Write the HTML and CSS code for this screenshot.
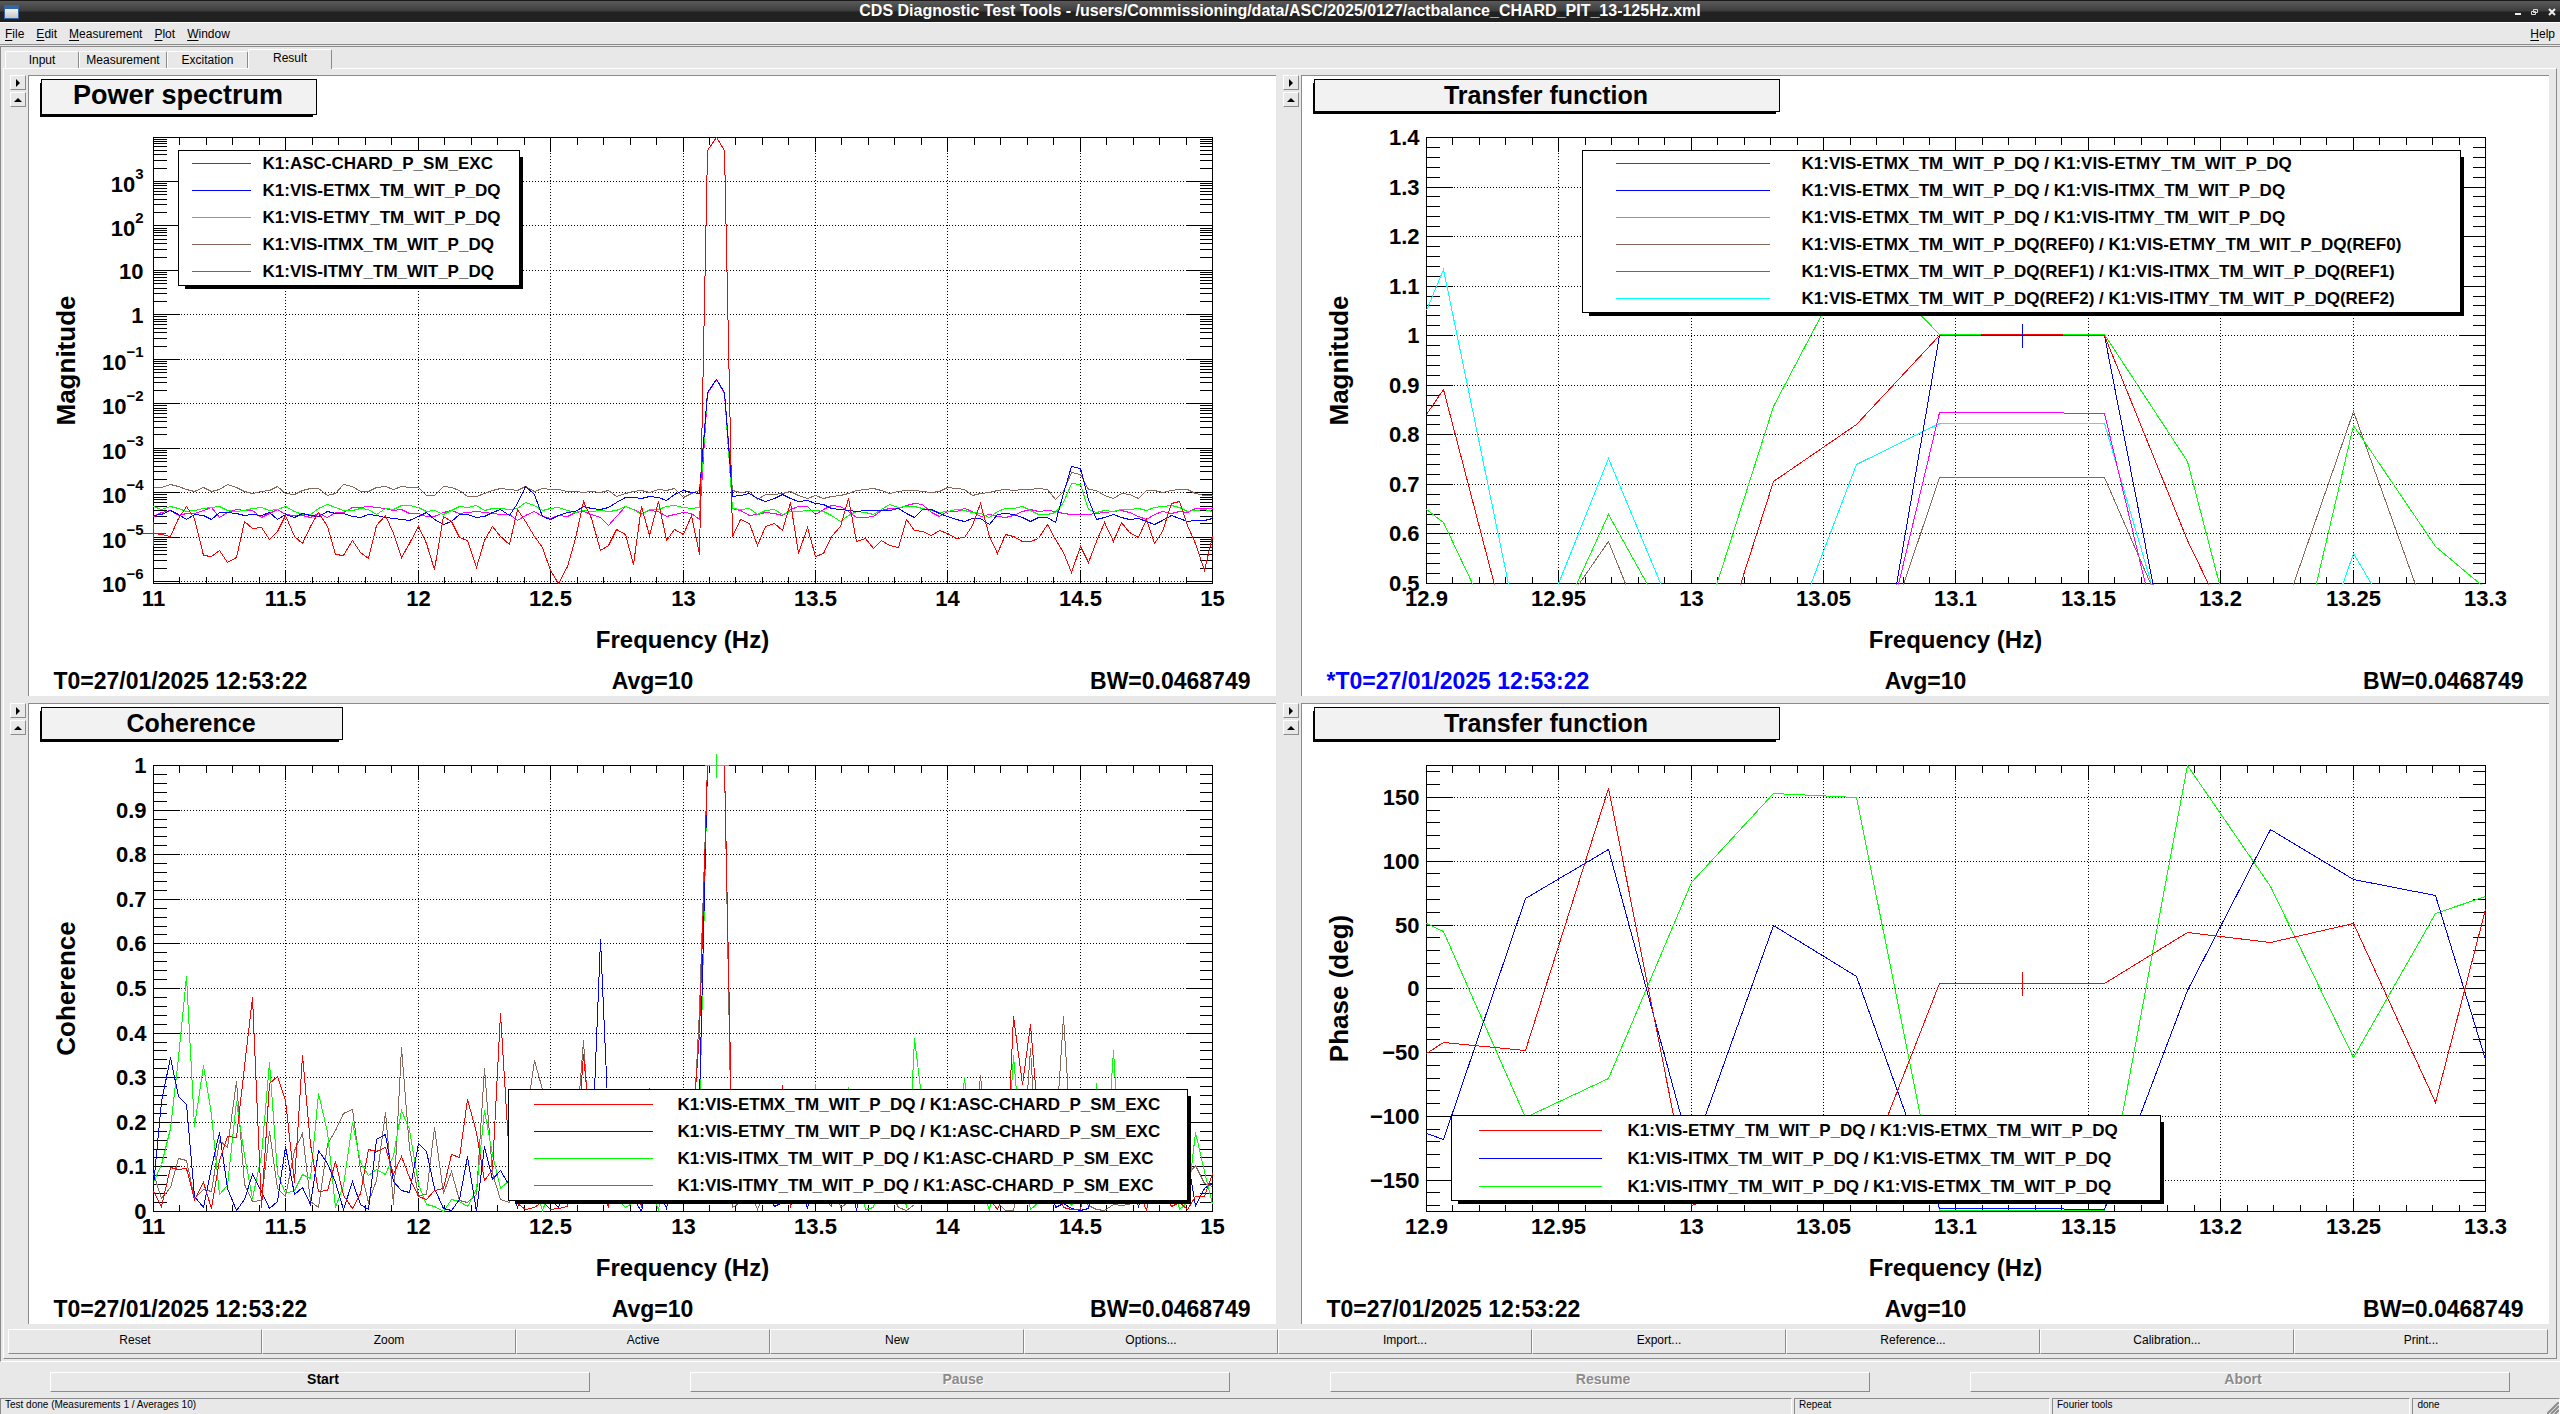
FILE: index.html
```html
<!DOCTYPE html>
<html lang="en">
  <head>
    <meta charset="utf-8" />
    <title>CDS Diagnostic Test Tools</title>
    <link rel="stylesheet" href="styles.css">
  </head>
  <body>
    <header class="titlebar">
      <svg class="appIcon" width="15" height="14" viewBox="0 0 15 14">
        <defs>
          <linearGradient id="paper" x1="0" y1="0" x2="0" y2="1">
            <stop offset="0" stop-color="#f2f2f2"/>
            <stop offset="1" stop-color="#c4c4c4"/>
          </linearGradient>
        </defs>
        <rect width="15" height="14" fill="#3465a4"/>
        <rect x="1" y="4" width="13" height="9" fill="url(#paper)"/>
      </svg>
      <h1>CDS Diagnostic Test Tools - /users/Commissioning/data/ASC/2025/0127/actbalance_CHARD_PIT_13-125Hz.xml</h1>
      <div class="windowButtons">
        <button title="Minimize"><svg width="8" height="8"><path d="M1 6h6" stroke="#eee" stroke-width="2"/></svg></button>
        <button title="Restore"><svg width="8" height="8"><path d="M2.5 1.5h4v3h-4zM.5 3.5h4v3h-4z" fill="none" stroke="#ddd"/></svg></button>
        <button title="Close"><svg width="8" height="8"><path d="M1 1l6 6M7 1l-6 6" stroke="#eee" stroke-width="2"/></svg></button>
      </div>
    </header>
    <nav class="menubar">
      <button><u>F</u>ile</button>
      <button><u>E</u>dit</button>
      <button><u>M</u>easurement</button>
      <button><u>P</u>lot</button>
      <button><u>W</u>indow</button>
      <button class="help"><u>H</u>elp</button>
    </nav>
    <main>
      <div class="tabs" role="tablist">
        <button role="tab" class="tabInput">Input</button>
        <button role="tab" class="tabMeasurement">Measurement</button>
        <button role="tab" class="tabExcitation">Excitation</button>
        <button role="tab" class="tabResult" aria-selected="true">Result</button>
      </div>
      <div class="pane">
        <div class="pads">
          <section class="pad">
            <div class="padButtons">
              <button title="Options"><svg width="4" height="8"><path d="M0 0l4 4l-4 4z"/></svg></button>
              <button title="Expand"><svg width="8" height="4"><path d="M0 4l4-4l4 4z"/></svg></button>
            </div>
            <svg class="plot" id="power" viewBox="-0.5 -0.5 1247 620"></svg>
          </section>
          <section class="pad">
            <div class="padButtons">
              <button title="Options"><svg width="4" height="8"><path d="M0 0l4 4l-4 4z"/></svg></button>
              <button title="Expand"><svg width="8" height="4"><path d="M0 4l4-4l4 4z"/></svg></button>
            </div>
            <svg class="plot" id="magnitude" viewBox="-0.5 -0.5 1247 620"></svg>
          </section>
          <section class="pad">
            <div class="padButtons">
              <button title="Options"><svg width="4" height="8"><path d="M0 0l4 4l-4 4z"/></svg></button>
              <button title="Expand"><svg width="8" height="4"><path d="M0 4l4-4l4 4z"/></svg></button>
            </div>
            <svg class="plot" id="coherence" viewBox="-0.5 -0.5 1247 620"></svg>
          </section>
          <section class="pad">
            <div class="padButtons">
              <button title="Options"><svg width="4" height="8"><path d="M0 0l4 4l-4 4z"/></svg></button>
              <button title="Expand"><svg width="8" height="4"><path d="M0 4l4-4l4 4z"/></svg></button>
            </div>
            <svg class="plot" id="phase" viewBox="-0.5 -0.5 1247 620"></svg>
          </section>
        </div>
        <div class="plotButtons">
          <button>Reset</button>
          <button>Zoom</button>
          <button>Active</button>
          <button>New</button>
          <button>Options...</button>
          <button>Import...</button>
          <button>Export...</button>
          <button>Reference...</button>
          <button>Calibration...</button>
          <button>Print...</button>
        </div>
      </div>
    </main>
    <div class="runButtons">
      <button>Start</button>
      <button disabled>Pause</button>
      <button disabled>Resume</button>
      <button disabled>Abort</button>
    </div>
    <footer class="statusbar">
      <span class="message">Test done (Measurements 1 / Averages 10)</span>
      <span class="mode">Repeat</span>
      <span class="tool">Fourier tools</span>
      <span class="state">done
        <svg class="grip" width="12" height="12"><path d="M0 12L12 0M4 12L12 4M8 12L12 8" stroke="#8b8b8b" stroke-width="2"/></svg>
      </span>
    </footer>
    <script src="plots.js"></script>
  </body>
</html>
```

FILE: styles.css
```css
html, body {
  height: 100%;
}

body {
  margin: 0;
  display: flex;
  flex-direction: column;
  background: #e8e8e8;
  color: #000;
  font-family: "Liberation Sans", Arial, sans-serif;
  font-size: 12px;
}

button {
  margin: 0;
  padding: 0;
  border: 0;
  background: #e8e8e8;
  color: #000;
  font: inherit;
}

/* window frame */

.titlebar {
  display: flex;
  align-items: center;
  height: 22px;
  padding: 0 4px;
  box-sizing: border-box;
  border-top: 1px solid #1a1818;
  background: linear-gradient(#5a5a5a, #3c3c3c 48%, #222 52%, #202020);
}

.titlebar h1 {
  flex: 1;
  margin: 0;
  text-align: center;
  color: #fff;
  font-size: 16px;
  line-height: 18px;
  padding: 0 0 2px 27px;
}

.windowButtons {
  display: flex;
  gap: 9px;
}

.windowButtons button {
  width: 8px;
  height: 20px;
  line-height: 0;
  background: none;
}

.menubar {
  display: flex;
  gap: 12px;
  height: 23px;
  padding: 0 5px;
  box-sizing: border-box;
  border-top: 1px solid #fff;
  border-bottom: 1px solid #8b8b8b;
  margin-bottom: 1px;
}

.menubar button {
  line-height: 20px;
}

.menubar u {
  text-underline-offset: 2px;
}

.menubar .help {
  margin-left: auto;
}

/* tabs */

main {
  padding: 2px 3px 2px 2px;
  border-top: 1px solid #8b8b8b;
  border-left: 1px solid #8b8b8b;
  border-bottom: 1px solid #fff;
}

.tabs {
  display: flex;
  align-items: flex-end;
  height: 19px;
  padding-left: 2px;
}

.tabs button {
  height: 17px;
  box-sizing: border-box;
  border-top: 1px solid #fff;
  border-left: 1px solid #fff;
  border-right: 1px solid #8b8b8b;
  border-radius: 2px 2px 0 0;
  line-height: 15px;
}

.tabInput {
  width: 74px;
}

.tabMeasurement {
  width: 88px;
}

.tabExcitation {
  width: 81px;
}

.tabs .tabResult {
  width: 84px;
  height: 20px;
  margin-bottom: -1px;
  line-height: 16px;
  padding-bottom: 3px;
}

.pane {
  padding: 6px 7px 4px 6px;
  border-top: 1px solid #fff;
  border-left: 1px solid #fff;
  border-right: 1px solid #8b8b8b;
  border-bottom: 1px solid #8b8b8b;
}

.pads {
  display: grid;
  grid-template-columns: 1fr 1fr;
  gap: 7px;
}

.pad {
  display: flex;
  gap: 2px;
  min-width: 0;
}

.padButtons {
  display: flex;
  flex-direction: column;
  gap: 2px;
}

.padButtons button {
  display: flex;
  align-items: center;
  justify-content: center;
  width: 16px;
  height: 15px;
}

.padButtons button,
.plotButtons button,
.runButtons button {
  box-sizing: border-box;
  border: 1px solid;
  border-color: #fff #8b8b8b #8b8b8b #fff;
}

.plotButtons {
  display: flex;
  margin: 5px 1px 0 -2px;
}

.plotButtons button {
  flex: 1;
  height: 25px;
  line-height: 20px;
  padding-bottom: 3px;
}

.runButtons {
  display: flex;
  padding: 10px 50px 6px;
  gap: 100px;
}

.runButtons button {
  flex: 1;
  height: 20px;
  padding: 0 0 5px 6px;
  font-size: 14px;
  font-weight: bold;
  line-height: 13px;
}

.runButtons button:disabled {
  color: #8b8b8b;
  text-shadow: 1px 1px #fff;
}

/* status bar */

.statusbar {
  flex: 1;
  display: flex;
  gap: 2px;
  font-size: 10px;
  line-height: 11px;
}

.statusbar span {
  box-sizing: border-box;
  padding-left: 4px;
  border-top: 1px solid #8b8b8b;
  border-left: 1px solid #8b8b8b;
  border-right: 1px solid #fff;
}

.message {
  width: 70%;
}

.mode {
  width: 10%;
}

.tool {
  width: 14%;
}

.state {
  flex: 1;
  position: relative;
}

.grip {
  position: absolute;
  right: 0;
  bottom: 0;
}

/* plots */

.plot {
  flex: 1;
  min-width: 0;
  display: block;
  background: #fff;
  border-top: 1px solid #8b8b8b;
  border-left: 1px solid #8b8b8b;
}

.plot text {
  font-weight: bold;
  font-size: 22px;
}

.plot rect,
.plot line,
.plot polyline,
.plot path {
  shape-rendering: crispEdges;
}

.plot .axis {
  fill: none;
  stroke: #000;
}

.plot .grid {
  stroke: #000;
  stroke-dasharray: 1 2;
}

.plot .trace {
  fill: none;
  stroke-width: 1;
}

.plot .titleBox {
  fill: #f2f2f2;
  stroke: #000;
}

.plot .legendBox {
  fill: #fff;
  stroke: #000;
}

.plot .title {
  font-size: 25px;
}

.plot .bigTitle {
  font-size: 27px;
}

.plot .legend {
  font-size: 17px;
}

.plot .xTitle {
  font-size: 24px;
}

.plot .yTitle {
  font-size: 26px;
}

.plot .exponent {
  font-size: 15px;
}

.plot .info {
  font-size: 23px;
}

.plot .reference {
  fill: #00f;
}

.middle {
  text-anchor: middle;
}

.end {
  text-anchor: end;
}
```

FILE: plots.js
```js
const SVG = 'http://www.w3.org/2000/svg';
const LEFT = 124, RIGHT = 1183, TOP = 61, BOTTOM = 507;

const RED = '#f00', BLUE = '#00f', GREEN = '#0f0';
const BROWN = '#86695a', MAGENTA = '#f0f', CYAN = '#0ff';

function add(parent, name, attrs, text) {
  const el = document.createElementNS(SVG, name);
  for (const key in attrs) el.setAttribute(key, attrs[key]);
  if (text !== undefined) el.textContent = text;
  parent.appendChild(el);
  return el;
}

function line(svg, cls, x1, y1, x2, y2, stroke) {
  const attrs = { class: cls, x1, y1, x2, y2 };
  if (stroke) attrs.stroke = stroke;
  add(svg, 'line', attrs);
}

function drawPlot(id, o) {
  const svg = document.getElementById(id);
  const px = x => Math.round(LEFT + (x - o.x[0]) / (o.x[1] - o.x[0]) * (RIGHT - LEFT));
  const py = y => Math.round(BOTTOM - (y - o.y[0]) / (o.y[1] - o.y[0]) * (BOTTOM - TOP));

  const clip = add(add(svg, 'defs', {}), 'clipPath', { id: id + 'Clip' });
  add(clip, 'rect', { x: LEFT - 1, y: TOP - 1, width: RIGHT - LEFT + 2, height: BOTTOM - TOP + 2 });

  // title
  const [tx, ty, tw, th] = o.titleBox;
  add(svg, 'rect', { x: tx - 2, y: ty + 3, width: tw - 2, height: th - 1 });
  add(svg, 'rect', { class: 'titleBox', x: tx, y: ty, width: tw, height: th });
  add(svg, 'text', { class: 'middle ' + (o.titleClass || 'title'), x: tx + tw / 2 - 1, y: 27 }, o.title);

  // x axis
  const minorX = o.xStep / 5;
  const count = Math.round((o.x[1] - o.x[0]) / minorX);
  for (let i = 0; i <= count; i++) {
    const x = px(o.x[0] + i * minorX);
    const major = i % 5 === 0;
    const len = major ? 14 : 7;
    line(svg, 'axis', x, TOP, x, TOP + len);
    line(svg, 'axis', x, BOTTOM, x, BOTTOM - len);
    if (major) {
      if (i > 0 && i < count) line(svg, 'grid', x, TOP, x, BOTTOM);
      const label = String(+(o.x[0] + i * minorX).toFixed(2));
      add(svg, 'text', { class: 'middle', x, y: 529 }, label);
    }
  }

  // y axis
  const yTick = (y, len) => {
    line(svg, 'axis', LEFT, y, LEFT + len, y);
    line(svg, 'axis', RIGHT, y, RIGHT - len, y);
  };
  if (o.log) {
    for (let d = -6; d <= 3; d++) {
      const y = py(d);
      yTick(y, 26);
      line(svg, 'grid', LEFT, y, RIGHT, y);
      for (let m = 2; m < 10; m++) {
        if (d + Math.log10(m) < o.y[1]) yTick(py(d + Math.log10(m)), 13);
      }
      if (d === 0 || d === 1) {
        add(svg, 'text', { class: 'end', x: 114, y: y + 8 }, d ? '10' : '1');
      } else {
        const t = add(svg, 'text', { class: 'end', x: 114, y: y + 10 }, '10');
        add(t, 'tspan', { class: 'exponent', dy: -13 }, String(d).replace('-', '\u2212'));
      }
    }
  } else {
    const first = Math.ceil(o.y[0] / o.yMinor - 0.001);
    const last = Math.floor(o.y[1] / o.yMinor + 0.001);
    for (let i = first; i <= last; i++) {
      const y = py(i * o.yMinor);
      const major = i % 5 === 0;
      yTick(y, major ? 26 : 13);
      if (major) {
        if (y > TOP && y < BOTTOM) line(svg, 'grid', LEFT, y, RIGHT, y);
        const label = String(+(i * o.yMinor).toFixed(1)).replace('-', '\u2212');
        add(svg, 'text', { class: 'end', x: 117, y: y + 7 }, label);
      }
    }
  }
  add(svg, 'rect', { class: 'axis', x: LEFT, y: TOP, width: RIGHT - LEFT, height: BOTTOM - TOP });

  // traces, first one on top
  for (const s of o.series.slice().reverse()) {
    const points = s.points || s.values.map((v, i) => [o.x[0] + i / 32, v]);
    const str = points.map(([x, v]) => px(x) + ',' + (o.counts ? BOTTOM - v : py(v))).join(' ');
    add(svg, 'polyline', { class: 'trace', points: str, stroke: s.color, 'clip-path': `url(#${id}Clip)` });
  }
  if (o.marker) {
    const [mx, my, color] = o.marker;
    const x = px(mx), y = o.counts ? BOTTOM - my : py(my);
    line(svg, 'trace', x, y - 12, x, y + 12, color);
    if (!o.markerBehind) line(svg, 'trace', x - 12, y, x + 12, y, color);
  }

  // legend
  const [lx, ly, lw, lh] = o.legendBox;
  add(svg, 'rect', { x: lx + 6, y: ly + 6, width: lw - 3, height: lh - 3 });
  add(svg, 'rect', { class: 'legendBox', x: lx, y: ly, width: lw, height: lh });
  o.series.forEach((s, i) => {
    const y = o.legendY + i * (o.legendStep || 27);
    line(svg, 'trace', o.legendLine[0], y, o.legendLine[1], y, s.color);
    add(svg, 'text', { class: 'legend', x: o.legendText, y: y + 5 }, s.name);
  });

  // axis titles and measurement info
  add(svg, 'text', { class: 'xTitle middle', x: 653, y: 571 }, 'Frequency (Hz)');
  add(svg, 'text', { class: 'yTitle middle', transform: 'translate(45 284) rotate(-90)' }, o.yTitle);
  add(svg, 'text', { class: 'info' + (o.t0Class || ''), x: 24, y: 612 }, o.t0);
  add(svg, 'text', { class: 'info middle', x: 623, y: 612 }, 'Avg=10');
  add(svg, 'text', { class: 'info end', x: 1221, y: 612 }, 'BW=0.0468749');
}

// power spectrum traces are kept as pixel counts above the lower frame edge
drawPlot('power', {
  title: 'Power spectrum', titleClass: 'bigTitle', titleBox: [12, 3, 275, 35],
  x: [11, 15], xStep: 0.5, y: [-6.04, 3.99], log: true, counts: true,
  yTitle: 'Magnitude', t0: 'T0=27/01/2025 12:53:22',
  legendBox: [149, 74, 341, 135], legendY: 87, legendLine: [162, 221], legendText: 233,
  marker: [11, 50, RED],
  series: [
    { name: 'K1:ASC-CHARD_P_SM_EXC', color: RED, values: [
      50,49,47,65,77,65,28,27,33,21,26,62,55,56,44,52,68,47,40,57,71,57,29,28,43,31,25,58,68,50,26,40,
      57,40,14,67,62,46,43,16,43,57,47,39,74,62,47,36,13,0,17,45,82,65,33,38,54,49,19,77,48,82,43,54,
      49,68,29,433,446,433,47,64,60,38,57,60,53,81,30,56,27,30,47,57,85,42,45,35,43,38,36,64,53,52,48,53,
      50,45,46,58,80,47,30,49,47,42,42,45,59,44,31,11,37,21,42,61,42,61,51,46,64,40,52,80,82,58,40,13,47] },
    { name: 'K1:VIS-ETMX_TM_WIT_P_DQ', color: BLUE, values: [
      68,69,73,69,64,69,68,64,71,71,70,68,69,68,71,64,69,66,70,68,67,72,70,70,67,66,69,68,66,65,64,63,
      67,71,64,59,62,69,69,66,67,71,74,68,80,97,89,67,64,68,71,72,77,75,74,76,81,86,86,85,87,86,83,89,
      93,91,90,191,204,191,87,88,90,85,82,85,89,85,82,83,80,79,75,74,73,72,73,73,73,73,75,70,66,74,74,70,
      67,64,62,65,65,59,69,70,69,66,62,66,66,61,90,117,115,84,64,66,69,66,64,65,62,59,63,68,65,62,63,63,65] },
    { name: 'K1:VIS-ETMY_TM_WIT_P_DQ', color: GREEN, values: [
      77,74,77,75,72,73,75,76,77,73,72,73,75,76,73,74,77,72,69,69,75,79,76,73,73,75,74,69,75,74,78,78,
      76,72,73,69,73,77,76,78,73,75,75,74,75,81,78,73,75,76,73,71,73,72,73,72,73,77,74,69,74,74,77,78,
      76,75,76,191,204,191,75,74,75,69,73,74,69,72,72,73,73,72,68,62,68,72,71,69,74,79,76,77,77,75,73,71,
      72,74,73,71,70,66,72,75,75,77,73,69,69,71,81,100,99,74,71,73,72,74,74,75,73,76,77,78,76,72,73,74,72] },
    { name: 'K1:VIS-ITMX_TM_WIT_P_DQ', color: BROWN, values: [
      96,96,99,97,94,92,96,92,94,99,96,92,90,92,93,97,90,89,93,95,95,88,90,99,97,92,92,96,97,94,97,96,
      96,88,88,97,96,93,87,87,90,93,95,94,93,97,92,95,94,94,92,92,91,92,91,93,87,90,92,93,91,94,93,95,
      86,90,93,191,204,191,93,91,92,84,89,89,90,92,88,85,88,85,87,88,90,93,94,95,93,90,92,93,93,92,91,92,
      96,95,94,88,90,91,93,94,93,94,94,95,94,84,92,111,109,94,93,88,85,90,89,85,93,93,91,93,94,94,90,88,88] },
    { name: 'K1:VIS-ITMY_TM_WIT_P_DQ', color: MAGENTA, values: [
      67,71,73,68,70,70,73,76,66,71,74,73,73,66,70,74,69,68,68,66,70,66,71,71,76,76,77,76,75,73,74,70,
      70,67,67,71,73,70,71,72,71,70,69,69,63,68,72,67,65,68,67,71,72,69,66,58,67,77,74,70,73,72,67,69,
      71,70,64,190,204,190,75,73,68,69,71,70,68,74,77,77,69,74,78,77,72,66,66,67,73,75,75,78,80,79,71,67,
      72,72,75,72,67,69,67,66,68,72,74,72,73,72,70,69,69,69,70,71,72,73,71,67,64,69,72,70,72,71,75,75,75] }
  ]
});

drawPlot('magnitude', {
  title: 'Transfer function', titleBox: [12, 3, 465, 32],
  x: [12.9, 13.3], xStep: 0.05, y: [0.5, 1.4], yMinor: 0.02,
  yTitle: 'Magnitude', t0: '*T0=27/01/2025 12:53:22', t0Class: ' reference',
  legendBox: [280, 74, 878, 162], legendY: 87, legendLine: [313, 467], legendText: 499,
  marker: [13.125, 1, BLUE], markerBehind: true,
  series: [
    { name: 'K1:VIS-ETMX_TM_WIT_P_DQ / K1:VIS-ETMY_TM_WIT_P_DQ', color: RED, points: [
      [12.9,0.842],[12.90625,0.892],[12.9375,0.257],[12.96875,0.2],[13,0.19],[13.03125,0.705],[13.0625,0.82],
      [13.09375,1],[13.109,1],[13.11,1.002],[13.14,1.002],[13.141,1],[13.15625,1],[13.1875,0.586],
      [13.21875,0.24],[13.25,0.3],[13.3,0.3]] },
    { name: 'K1:VIS-ETMX_TM_WIT_P_DQ / K1:VIS-ITMX_TM_WIT_P_DQ', color: BLUE, points: [
      [12.9,0.1],[13.0625,0.03],[13.09375,1],[13.15625,1],[13.1875,0.14],[13.3,0.1]] },
    { name: 'K1:VIS-ETMX_TM_WIT_P_DQ / K1:VIS-ITMY_TM_WIT_P_DQ', color: GREEN, points: [
      [12.9,0.65],[12.90625,0.623],[12.9375,0.275],[12.96875,0.64],[13,0.338],[13.03125,0.858],[13.0625,1.175],
      [13.09375,1.002],[13.15625,1.002],[13.1875,0.746],[13.21875,0.104],[13.25,0.819],[13.28125,0.575],[13.3,0.49]] },
    { name: 'K1:VIS-ETMX_TM_WIT_P_DQ(REF0) / K1:VIS-ETMY_TM_WIT_P_DQ(REF0)', color: BROWN, points: [
      [12.9,0.3],[12.9375,0.343],[12.96875,0.585],[13,0.17],[13.03125,0.2],[13.0625,0.216],[13.09375,0.713],
      [13.15625,0.713],[13.1875,0.328],[13.21875,0.365],[13.25,0.848],[13.28125,0.384],[13.3,0.4]] },
    { name: 'K1:VIS-ETMX_TM_WIT_P_DQ(REF1) / K1:VIS-ITMX_TM_WIT_P_DQ(REF1)', color: MAGENTA, points: [
      [12.9,0.1],[13.0625,0.143],[13.09375,0.845],[13.125,0.845],[13.15625,0.843],[13.1875,0.144],[13.3,0.1]] },
    { name: 'K1:VIS-ETMX_TM_WIT_P_DQ(REF2) / K1:VIS-ITMY_TM_WIT_P_DQ(REF2)', color: CYAN, points: [
      [12.9,1.05],[12.90625,1.134],[12.9375,0.333],[12.96875,0.752],[13,0.351],[13.03125,0.3],[13.0625,0.741],
      [13.09375,0.823],[13.15625,0.823],[13.1875,0.25],[13.21875,0.08],[13.25,0.561],[13.28125,0.28],[13.3,0.3]] }
  ]
});

drawPlot('coherence', {
  title: 'Coherence', titleBox: [12, 3, 301, 32],
  x: [11, 15], xStep: 0.5, y: [0, 1], yMinor: 0.02,
  yTitle: 'Coherence', t0: 'T0=27/01/2025 12:53:22',
  legendBox: [479, 385, 679, 111], legendY: 400, legendLine: [504, 623], legendText: 648,
  marker: [13.125, 1, GREEN],
  series: [
    { name: 'K1:VIS-ETMX_TM_WIT_P_DQ / K1:ASC-CHARD_P_SM_EXC', color: RED, values: [
      .044,.011,.098,.094,.097,.026,.064,.006,.115,.169,.165,.325,.48,.01,.286,.302,.248,.064,.35,.151,.044,.047,
      .112,.036,.007,.041,.14,.135,.143,.083,.123,.077,.034,.026,.047,.052,.127,.12,.251,.177,.069,.095,.444,.115,
      .018,.004,.008,.023,.005,.006,.011,.105,.353,.156,.05,.011,.1,.04,.1,.01,.276,.1,.15,.08,
      .12,.15,.4,1,1,1,.1,.05,.1,.15,.05,.1,.283,.01,.1,.15,.1,.03,.011,.1,.12,.06,
      .1,.2,.1,.05,.1,.15,.1,.05,.1,.15,.1,.05,.1,.12,.05,.03,.005,.05,.438,.284,.42,.2,
      .1,.05,.008,.004,.005,.08,.1,.06,.1,.12,.1,.05,.003,.1,.05,.011,.02,.005,.034,.033,.085] },
    { name: 'K1:VIS-ETMY_TM_WIT_P_DQ / K1:ASC-CHARD_P_SM_EXC', color: BLUE, values: [
      .059,.246,.345,.258,.24,.034,.009,.099,.177,.051,.003,.027,.084,.044,.007,.023,.146,.039,.053,.015,.136,.108,
      .064,.005,.067,.015,.005,.162,.172,.067,.046,.043,.153,.135,.051,.007,.003,.026,.124,.001,.146,.072,.093,.059,
      .01,.05,.08,.12,.03,.01,.08,.05,.1,.1,.609,.2,.05,.1,.03,.001,.1,.05,.006,.08,
      .1,.05,.25,1,1,1,.1,.05,.08,.1,.05,.011,.02,.1,.08,.006,.1,.05,.1,.12,.08,.003,
      .1,.08,.12,.1,.05,.1,.12,.1,.08,.1,.12,.08,.1,.05,.1,.08,.1,.12,.1,.05,.1,.08,
      .1,.008,.019,.006,.002,.006,.1,.08,.1,.12,.1,.01,.1,.08,.1,.12,.1,.12,.014,.052,.064] },
    { name: 'K1:VIS-ITMX_TM_WIT_P_DQ / K1:ASC-CHARD_P_SM_EXC', color: GREEN, values: [
      .066,.105,.187,.345,.527,.19,.327,.218,.037,.059,.246,.126,.03,.126,.333,.085,.041,.046,.084,.075,.265,.177,
      .01,.059,.199,.11,.081,.095,.084,.126,.227,.184,.061,.015,.011,.001,.026,.022,.012,.049,.227,.128,.051,.069,
      .1,.08,.06,.003,.05,.1,.08,.1,.15,.1,.08,.05,.03,.008,.02,.1,.05,.005,.08,.1,
      .08,.05,.2,1,1,1,.1,.08,.1,.12,.1,.08,.1,.12,.1,.08,.284,.1,.08,.1,.278,.1,
      .005,.01,.1,.08,.1,.01,.387,.24,.1,.08,.1,.08,.3,.1,.05,.005,.08,.05,.35,.1,.005,.02,
      .1,.08,.05,.013,.05,.1,.286,.05,.36,.05,.1,.08,.1,.12,.1,.08,.005,.02,.177,.09,.016] },
    { name: 'K1:VIS-ITMY_TM_WIT_P_DQ / K1:ASC-CHARD_P_SM_EXC', color: BROWN, values: [
      .085,.03,.054,.118,.114,.03,.049,.044,.159,.144,.292,.061,.022,.025,.18,.051,.034,.136,.174,.023,.008,.151,
      .182,.219,.229,.095,.02,.069,.223,.015,.367,.141,.036,.038,.189,.041,.09,.025,.02,.037,.32,.085,.028,.02,
      .1,.2,.338,.274,.15,.1,.05,.15,.384,.1,.08,.1,.05,.1,.08,.1,.12,.1,.08,.1,
      .08,.1,.45,1,1,1,.01,.02,.05,.005,.05,.1,.08,.1,.12,.1,.08,.1,.1,.008,.02,.05,
      .1,.08,.1,.05,.01,.003,.015,.05,.1,.08,.1,.05,.08,.1,.304,.1,.02,.003,.003,.1,.365,.05,
      .1,.16,.438,.15,.03,.013,.005,.003,.015,.013,.015,.05,.1,.08,.1,.12,.1,.08,.103,.062,.056] }
  ]
});

drawPlot('phase', {
  title: 'Transfer function', titleBox: [12, 3, 465, 32],
  x: [12.9, 13.3], xStep: 0.05, y: [-174.5, 175], yMinor: 10,
  yTitle: 'Phase (deg)', t0: 'T0=27/01/2025 12:53:22',
  legendBox: [149, 411, 709, 85], legendY: 426, legendStep: 28, legendLine: [176, 299], legendText: 325,
  marker: [13.125, 4.5, RED],
  series: [
    { name: 'K1:VIS-ETMY_TM_WIT_P_DQ / K1:VIS-ETMX_TM_WIT_P_DQ', color: RED, points: [
      [12.9,-51],[12.90625,-42],[12.9375,-48],[12.96875,157],[13,-170],[13.03125,-147],[13.0625,-162],
      [13.09375,4.5],[13.15625,4.5],[13.1875,44.5],[13.21875,36],[13.25,51],[13.28125,-89],[13.3,62]] },
    { name: 'K1:VIS-ITMX_TM_WIT_P_DQ / K1:VIS-ETMX_TM_WIT_P_DQ', color: BLUE, points: [
      [12.9,-113],[12.90625,-118],[12.9375,70.5],[12.96875,109.5],[13,-130],[13.03125,50],[13.0625,10],
      [13.09375,-172],[13.125,-172],[13.15625,-173],[13.1875,-1],[13.21875,125],[13.25,86],[13.28125,73],[13.3,-55]] },
    { name: 'K1:VIS-ITMY_TM_WIT_P_DQ / K1:VIS-ETMX_TM_WIT_P_DQ', color: GREEN, points: [
      [12.9,51.5],[12.90625,45],[12.9375,-101],[12.96875,-70],[13,83],[13.03125,153],[13.0625,150],
      [13.09375,-174],[13.15625,-174],[13.1875,175],[13.21875,80],[13.25,-54],[13.28125,59],[13.3,72]] }
  ]
});
```
